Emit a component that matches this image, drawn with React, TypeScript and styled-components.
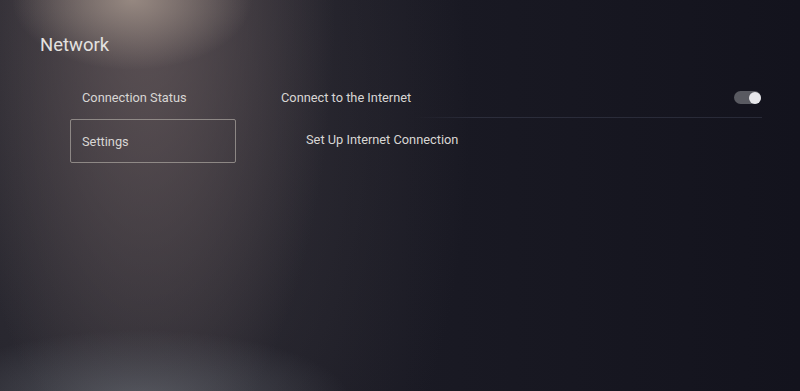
import React from "react";
import styled, { createGlobalStyle } from "styled-components";

const Global = createGlobalStyle`
  html, body { margin: 0; padding: 0; width: 800px; height: 391px; overflow: hidden; background: #15151f; }
  * { box-sizing: border-box; }
`;

const Screen = styled.div`
  width: 800px;
  height: 391px;
  position: relative;
  overflow: hidden;
  font-family: Roboto, "Noto Sans", sans-serif;
  color: #e4e2e0;
  background:
    radial-gradient(ellipse 120px 70px at 132px 0px, rgba(165,150,140,0.8), rgba(165,150,140,0) 100%),
    radial-gradient(ellipse 210px 70px at 140px 400px, rgba(100,104,112,0.7), rgba(100,104,112,0) 100%),
    radial-gradient(ellipse 190px 480px at 145px 0px, rgba(105,92,94,0.75), rgba(105,92,94,0) 100%),
    radial-gradient(ellipse 320px 560px at 150px 120px, rgba(62,58,64,0.75), rgba(62,58,64,0) 100%),
    linear-gradient(90deg, #202029 0%, #1a1a24 50%, #13131d 100%);
`;

const Title = styled.h1`
  margin: 0;
  padding: 32px 0 0 40px;
  font-size: 18.5px;
  font-weight: 400;
  line-height: 26px;
  color: #e4e2e0;
`;

const Body = styled.div`
  display: grid;
  grid-template-columns: 166px 481px;
  column-gap: 45px;
  padding: 17px 0 0 70px;
`;

const Menu = styled.div`
  display: flex;
  flex-direction: column;
`;

const MenuItem = styled.div<{ $selected?: boolean }>`
  height: 44px;
  display: flex;
  align-items: center;
  padding-left: 11px;
  font-size: 12.8px;
  color: #d8d6d4;
  border: 1px solid ${(p) => (p.$selected ? "rgba(165,160,155,0.75)" : "transparent")};
  border-radius: 2px;
`;

const List = styled.div`
  display: flex;
  flex-direction: column;
  padding-top: 3px;
`;

const Row = styled.div<{ $indent?: boolean; $divider?: boolean }>`
  height: ${(p) => (p.$divider ? "40px" : "42px")};
  display: flex;
  align-items: center;
  justify-content: space-between;
  padding-left: ${(p) => (p.$indent ? "25px" : "0")};
  font-size: 12.8px;
  color: #d8d6d4;
  border-bottom: ${(p) => (p.$divider ? "1px solid transparent" : "none")};
  border-image: ${(p) =>
    p.$divider
      ? "linear-gradient(90deg, rgba(60,60,75,0) 0%, rgba(60,60,75,0) 28%, rgba(46,48,62,0.9) 40%, rgba(42,44,58,0.9) 100%) 1"
      : "none"};
`;

const Toggle = styled.div`
  width: 27px;
  height: 13px;
  border-radius: 7px;
  background: #595a61;
  display: flex;
  justify-content: flex-end;
  align-items: center;
  margin-right: 1px;
`;

const Knob = styled.div`
  width: 12px;
  height: 12px;
  border-radius: 50%;
  background: #e6e6ea;
`;

export default function App() {
  return (
    <Screen>
      <Global />
      <Title>Network</Title>
      <Body>
        <Menu>
          <MenuItem>Connection Status</MenuItem>
          <MenuItem $selected>Settings</MenuItem>
        </Menu>
        <List>
          <Row $divider>
            <span>Connect to the Internet</span>
            <Toggle>
              <Knob />
            </Toggle>
          </Row>
          <Row $indent>
            <span>Set Up Internet Connection</span>
          </Row>
        </List>
      </Body>
    </Screen>
  );
}
